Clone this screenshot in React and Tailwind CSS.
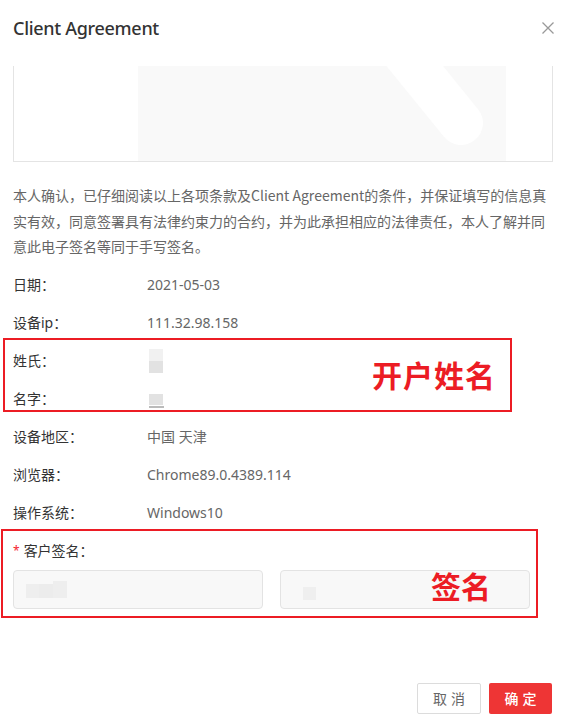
import React from "react";

const rows = [
  ["日期：", "2021-05-03"],
  ["设备ip：", "111.32.98.158"],
  ["姓氏：", "__sur"],
  ["名字：", "__name"],
  ["设备地区：", "中国 天津"],
  ["浏览器：", "Chrome89.0.4389.114"],
  ["操作系统：", "Windows10"],
];

function Value({ v }) {
  if (v === "__sur") {
    return (
      <div className="flex flex-col ml-[2px]">
        <div className="w-[14px] h-[12px] bg-[#f1f1f1]" />
        <div className="w-[14px] h-[12px] bg-[#e2e2e2]" />
      </div>
    );
  }
  if (v === "__name") {
    return (
      <div className="flex flex-col ml-[2px] mt-[4px]">
        <div className="w-[14px] h-[11px] bg-[#e2e2e2]" />
        <div className="w-[15px] h-[2px] bg-[#bbbbbb] mt-[1px]" />
      </div>
    );
  }
  return <span className="text-[#666]">{v}</span>;
}

export default function App() {
  return (
    <div className="relative w-[566px] h-[720px] bg-white overflow-hidden font-['Noto_Sans','Noto_Sans_CJK_SC',sans-serif] text-[14px]">
      {/* header */}
      <div className="h-[56px] px-[13px] flex items-center justify-between">
        <div className="text-[18px] font-medium text-[#333] tracking-[-0.3px]">Client Agreement</div>
        <svg width="12" height="12" viewBox="0 0 12 12" className="mr-[-1px]">
          <path d="M0.5 0.5 L11.5 11.5 M11.5 0.5 L0.5 11.5" stroke="#999" strokeWidth="1.3" fill="none" />
        </svg>
      </div>

      {/* scrolled content box */}
      <div className="mt-[10px] mx-[13px] h-[96px] border-x border-b border-[#e4e4e4]">
        <div className="ml-[124px] w-[368px] h-full bg-[#f9f9f9] relative overflow-hidden">
          <svg width="368" height="95" viewBox="0 0 368 95" className="absolute left-0 top-0">
            <line x1="228" y1="-60" x2="323" y2="57" stroke="#ffffff" strokeWidth="44" strokeLinecap="round" />
          </svg>
        </div>
      </div>

      {/* paragraph */}
      <p className="mt-[21px] px-[13px] leading-[25.5px] text-[#666] font-['Noto_Sans_CJK_SC',sans-serif]">
        本人确认，已仔细阅读以上各项条款及Client Agreement的条件，并保证填写的信息真实有效，同意签署具有法律约束力的合约，并为此承担相应的法律责任，本人了解并同意此电子签名等同于手写签名。
      </p>

      {/* info rows */}
      <div className="mt-[6px] px-[13px]">
        {rows.map(([k, v]) => (
          <div key={k} className="h-[38px] flex items-center">
            <div className="w-[134px] text-[#333]">{k}</div>
            <Value v={v} />
          </div>
        ))}
        <div className="h-[38px] flex items-center">
          <span className="text-[#f5222d] mr-[4px] text-[12px]">*</span>
          <span className="text-[#333]">客户签名：</span>
        </div>
        <div className="flex gap-[17px]">
          <div className="w-[250px] h-[39px] rounded-[4px] border border-[#e3e3e3] bg-[#f8f8f8] flex items-center pl-[12px]">
            <div className="flex">
              <div className="w-[13px] h-[14px] bg-[#eeeeee] mt-[3px]" />
              <div className="w-[14px] h-[14px] bg-[#ececec] mt-[3px]" />
              <div className="w-[14px] h-[17px] bg-[#eeeeee]" />
            </div>
          </div>
          <div className="w-[250px] h-[39px] rounded-[4px] border border-[#e3e3e3] bg-[#f8f8f8] flex items-center pl-[22px]">
            <div className="w-[13px] h-[13px] bg-[#efefef] mt-[8px]" />
          </div>
        </div>
      </div>

      {/* footer */}
      <div className="mt-[74px] pr-[14px] flex justify-end gap-[8px]">
        <button className="w-[64px] h-[31px] border border-[#dcdcdc] rounded-[2px] bg-white text-[#666] text-[14px] tracking-[4px] pl-[4px]">
          取消
        </button>
        <button className="w-[63px] h-[31px] rounded-[2px] bg-[#ee3535] text-white text-[14px] font-medium tracking-[4px] pl-[4px]">
          确定
        </button>
      </div>

      {/* annotation overlays */}
      <div className="absolute left-[3px] top-[338px] w-[509px] h-[74px] border-2 border-[#ec1c24]">
        <div className="absolute left-[367px] top-[19px] text-[30px] leading-[30px] font-bold text-[#ec1c24] font-['Noto_Sans_CJK_SC',sans-serif] tracking-[1px]">
          开户姓名
        </div>
      </div>
      <div className="absolute left-[1px] top-[529px] w-[537px] h-[89px] border-2 border-[#ec1c24]">
        <div className="absolute left-[428px] top-[39px] text-[30px] leading-[30px] font-bold text-[#ec1c24] font-['Noto_Sans_CJK_SC',sans-serif]">
          签名
        </div>
      </div>
    </div>
  );
}
